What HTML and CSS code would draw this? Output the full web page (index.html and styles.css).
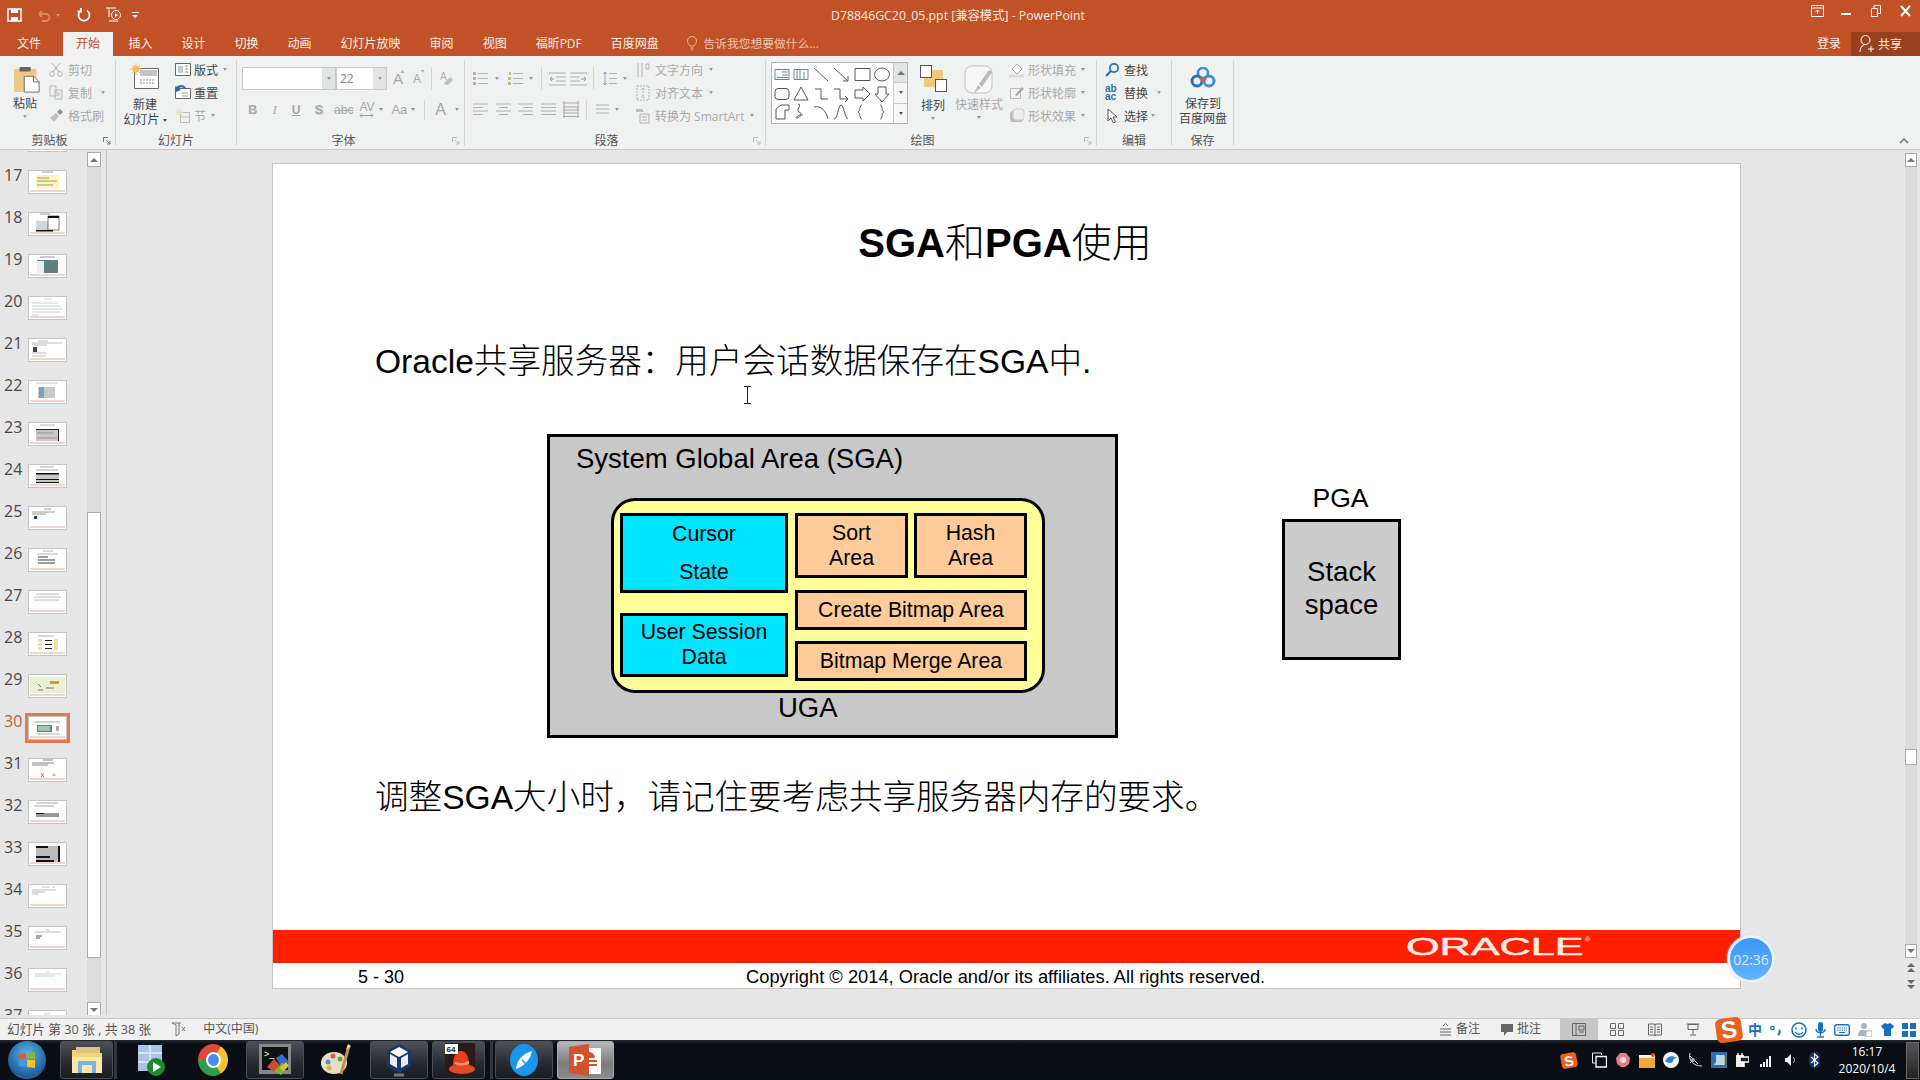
FILE: index.html
```html
<!DOCTYPE html>
<html lang="zh-CN">
<head>
<meta charset="utf-8">
<title>D78846GC20_05.ppt - PowerPoint</title>
<link rel="stylesheet" href="styles.css">
</head>
<body>
<div class="app">
  <header class="titlebar">
    <svg class="ml7" width="15" height="14" viewBox="0 0 15 14"><path d="M1 1h13v12H1z" fill="none" stroke="#fff" stroke-width="1.5"/><path d="M4 1h7v4H4zM4 9h7v4H4z" fill="#fff"/></svg>
    <svg class="ml15 faded" width="14" height="13" viewBox="0 0 14 13"><path d="M2 5h7a3.500 3.500 0 0 1 0 7H5M2 5l3-3M2 5l3 3" fill="none" stroke="#e8a080" stroke-width="1.800"/></svg>
    <span class="dd dd-faded ml5"></span>
    <svg class="ml17" width="14" height="14" viewBox="0 0 14 14"><path d="M10 2.500a5.500 5.500 0 1 1-6 0M4 0v3.500H.5" fill="none" stroke="#fff" stroke-width="1.800"/></svg>
    <svg class="ml14" width="17" height="16" viewBox="0 0 17 16"><path d="M1 1h10M4 1v9M13 14H4" fill="none" stroke="#fff"/><circle cx="11" cy="8" r="4.500" fill="none" stroke="#fff"/><path d="M10 6l3 2-3 2z" fill="#fff"/></svg>
    <span class="qat-more ml10"></span>
    <div class="doc-title">D78846GC20_05.ppt [兼容模式] - PowerPoint</div>
    <div class="winctl">
      <svg width="13" height="12" viewBox="0 0 13 12"><path d="M.5.500h12v11H.5zM.5 3h12M6.500 9V5M4.500 7l2-2 2 2" fill="none" stroke="#fff"/></svg>
      <svg class="ml17" width="10" height="12" viewBox="0 0 10 12"><path d="M0 9h10" stroke="#fff" stroke-width="2"/></svg>
      <svg class="ml20" width="10" height="12" viewBox="0 0 10 12"><path d="M.5 3.500h6v8h-6zM3 3V.5h6.500v8H7" fill="none" stroke="#fff"/></svg>
      <svg class="ml19" width="11" height="12" viewBox="0 0 11 12"><path d="M1 1l9 10M10 1L1 11" stroke="#fff" stroke-width="2"/></svg>
    </div>
  </header>

  <nav class="tabs">
    <span class="tab">文件</span><span class="tab tab-on">开始</span><span class="tab">插入</span><span class="tab">设计</span><span class="tab">切换</span><span class="tab">动画</span><span class="tab">幻灯片放映</span><span class="tab">审阅</span><span class="tab">视图</span><span class="tab">福昕PDF</span><span class="tab">百度网盘</span>
    <svg class="ml13" width="12" height="15" viewBox="0 0 12 15"><path d="M4 10C3 8 1.500 7.500 1.500 5a4.500 4.500 0 0 1 9 0c0 2.500-1.500 3-2.500 5zM4.500 12h3M5 14h2" fill="none" stroke="#eeb9a0"/></svg>
    <span class="tellme">告诉我您想要做什么...</span>
    <span class="login">登录</span>
    <span class="share"><svg width="15" height="20" viewBox="0 0 15 20"><circle cx="6.500" cy="6" r="4.500" fill="none" stroke="#fff"/><path d="M1 18c0-4 2-7 5-7.500M9 15h6M12 12v6" fill="none" stroke="#fff"/></svg>共享</span>
  </nav>

  <section class="ribbon">
    <!-- clipboard -->
    <div class="group w-clip">
      <div class="g-body">
        <div class="big ml13 w-paste">
          <svg class="mt5" width="27" height="29" viewBox="0 0 29 29"><rect x="0" y="3" width="24" height="25" rx="1" fill="#efc880"/><rect x="6" y="1" width="12" height="5" rx="1" fill="#666"/><path d="M11 11h10l6 6v11H11z" fill="#fff" stroke="#666"/><path d="M21 11v6h6" fill="none" stroke="#666"/></svg>
          <span class="lab dark mt2 nudge-l">粘贴</span>
          <span class="dd mt4 nudge-l"></span>
        </div>
        <div class="rows ml8">
          <div class="row"><svg width="14" height="15" viewBox="0 0 14 15"><path d="M3 1l7 9M11 1l-7 9" stroke="#b0b0b0" fill="none"/><circle cx="3" cy="12" r="2.300" fill="none" stroke="#b0b0b0"/><circle cx="11" cy="12" r="2.300" fill="none" stroke="#b0b0b0"/></svg><span class="ml5 off">剪切</span></div>
          <div class="row"><svg width="14" height="15" viewBox="0 0 14 15"><path d="M1 1h6v10H1zM6 5h7v9H6z" fill="#f0f1f1" stroke="#b8b8b8"/><path d="M8 8h3M8 10h3" stroke="#b8b8b8"/></svg><span class="ml5 off">复制</span><span class="dd ml9"></span></div>
          <div class="row"><svg width="14" height="15" viewBox="0 0 14 15"><path d="M1 10l6-5 3 3-5 6z" fill="#c0c0c0"/><path d="M8 4l3-3 3 3-3 3z" fill="#909090"/></svg><span class="ml5 off">格式刷</span></div>
        </div>
      </div>
      <div class="g-label lab-clip">剪贴板<svg class="launch" width="8" height="8" viewBox="0 0 8 8"><path d="M.5 5V.5H5M3 3l4 4M7 4v3H4" fill="none" stroke="#777"/></svg></div>
    </div>
    <!-- slides -->
    <div class="group w-slide">
      <div class="g-body">
        <div class="big ml7 w-new">
          <svg class="mt3" width="30" height="27" viewBox="0 0 30 27"><path d="M4.500 5.500h24v20h-24z" fill="#fff" stroke="#666"/><path d="M10 7h17v6H10z" fill="#c4c4c4"/><path d="M10 17h14M10 20h14" stroke="#888" stroke-dasharray="2 1"/><circle cx="6" cy="6" r="3.500" fill="#f0c060"/><path d="M6 0v12M0 6h12M2 2l8 8M10 2l-8 8" stroke="#f0c060"/></svg>
          <span class="lab dark mt7">新建</span>
          <span class="lab dark lh15">幻灯片<span class="dd ml3 dd-dark"></span></span>
        </div>
        <div class="rows ml8">
          <div class="row"><svg width="16" height="15" viewBox="0 0 16 15"><path d="M.5 1.500h15v12H.5z" fill="#fff" stroke="#666"/><path d="M3 4h5v7H3z" fill="#bcd"/><path d="M10 4h3M10 7h3M10 10h3" stroke="#888"/></svg><span class="ml3 dark">版式</span><span class="dd ml5"></span></div>
          <div class="row"><svg width="16" height="15" viewBox="0 0 16 15"><path d="M.5 3.500h15v10H.5z" fill="#fff" stroke="#666"/><path d="M7 8h6M7 11h6" stroke="#999"/><path d="M1 6a5 4 0 0 1 9-3" fill="none" stroke="#2a6db0" stroke-width="2.200"/><path d="M0 1l1 6 5-2z" fill="#2a6db0"/></svg><span class="ml3 dark">重置</span></div>
          <div class="row"><svg width="16" height="15" viewBox="0 0 16 15"><path d="M5.500 4.500h9v10h-9zM5.500 9h9" fill="none" stroke="#bbb"/><path d="M4 0v8M0 4h8M1 1l6 6M7 1L1 7" stroke="#e8dcc0"/></svg><span class="ml3 off">节</span><span class="dd ml5"></span></div>
        </div>
      </div>
      <div class="g-label">幻灯片</div>
    </div>
    <!-- font -->
    <div class="group w-font">
      <div class="g-body col">
        <div class="line1 ml5">
          <span class="combo w-fname"></span><span class="combo-arrow"><span class="dd"></span></span><span class="combo w-fsize">22</span><span class="combo-arrow"><span class="dd"></span></span>
          <span class="glyph big-a ml6">A<sup class="up">▴</sup></span>
          <span class="glyph mid-a ml8">A<sup class="up">▾</sup></span>
          <span class="vsep ml8"></span>
          <svg class="ml7" width="15" height="16" viewBox="0 0 15 16"><text x="1" y="9" class="svgtxt" font-size="10" fill="#b0b0b0">A</text><path d="M5 12l6-6 3 3-5 5H7z" fill="#c0c0c0"/></svg>
        </div>
        <div class="line2 ml11">
          <span class="glyph bold">B</span>
          <span class="glyph ital ml15">I</span>
          <span class="glyph under ml15">U</span>
          <span class="glyph bold shad ml14">S</span>
          <span class="glyph strike ml11">abc</span>
          <span class="glyph av ml6">AV<svg class="av-arrow" width="15" height="5" viewBox="0 0 15 5"><path d="M1 2.500h13M3 .5l-2 2 2 2M12 .5l2 2-2 2" fill="none" stroke="#999"/></svg></span>
          <span class="dd ml5"></span>
          <span class="glyph aa ml8">Aa</span>
          <span class="dd ml4"></span>
          <span class="vsep short ml9"></span>
          <span class="glyph a-col ml10">A</span>
          <span class="dd ml9"></span>
        </div>
      </div>
      <div class="g-label lab-font">字体<svg class="launch" width="8" height="8" viewBox="0 0 8 8"><path d="M.5 5V.5H5M3 3l4 4M7 4v3H4" fill="none" stroke="#bbb"/></svg></div>
    </div>
    <!-- paragraph -->
    <div class="group w-para">
      <div class="g-body">
        <div class="col w-para-l">
          <div class="line1 ml8">
            <svg width="15" height="15" viewBox="0 0 15 15"><path d="M5 2.500h10M5 7.500h10M5 12.500h10" stroke="#b0b0b0"/><path d="M0 1h3v3H0zM0 6h3v3H0zM0 11h3v3H0z" fill="#b0b0b0"/></svg>
            <span class="dd ml7"></span>
            <svg class="ml9" width="15" height="15" viewBox="0 0 15 15"><path d="M5 2.500h10M5 7.500h10M5 12.500h10" stroke="#b0b0b0"/><path d="M1 1h2v3H1zM0 6h3v3H0zM0 11h3v3H0z" fill="#c4b890"/></svg>
            <span class="dd ml6"></span>
            <span class="vsep ml8"></span>
            <svg class="ml7" width="17" height="14" viewBox="0 0 17 14"><path d="M0 1h17M7 5h10M7 9h10M0 13h17" stroke="#b0b0b0"/><path d="M5 7H1M3 5L1 7l2 2" stroke="#7aa0c0" fill="none"/></svg>
            <svg class="ml4" width="17" height="14" viewBox="0 0 17 14"><path d="M0 1h17M0 5h10M0 9h10M0 13h17" stroke="#b0b0b0"/><path d="M11 7h5M14 5l2 2-2 2" stroke="#7aa0c0" fill="none"/></svg>
            <span class="vsep ml6"></span>
            <svg class="ml8" width="15" height="15" viewBox="0 0 15 15"><path d="M7 2.500h8M7 7.500h8M7 12.500h8" stroke="#b0b0b0"/><path d="M3 1v13M1 3l2-2 2 2M1 12l2 2 2-2" stroke="#8aa8c4" fill="none"/></svg>
            <span class="dd ml6"></span>
          </div>
          <div class="line2 ml8">
            <svg width="15" height="13" viewBox="0 0 15 13"><path d="M0 1h15M0 4.500h10M0 8h15M0 11.500h10" stroke="#b0b0b0"/></svg>
            <svg class="ml8" width="15" height="13" viewBox="0 0 15 13"><path d="M0 1h15M3 4.500h9M0 8h15M3 11.500h9" stroke="#b0b0b0"/></svg>
            <svg class="ml7" width="15" height="13" viewBox="0 0 15 13"><path d="M0 1h15M5 4.500h10M0 8h15M5 11.500h10" stroke="#b0b0b0"/></svg>
            <svg class="ml8" width="15" height="13" viewBox="0 0 15 13"><path d="M0 1h15M0 4.500h15M0 8h15M0 11.500h15" stroke="#b0b0b0"/></svg>
            <svg class="ml7" width="16" height="17" viewBox="0 0 16 17"><path d="M0 2h16M0 15.500h16M0 6h16M0 9h16M0 12h16M1 0v17M15 0v17" stroke="#a8a8a8"/></svg>
            <span class="vsep short ml7"></span>
            <svg class="ml9" width="13" height="13" viewBox="0 0 13 13"><path d="M0 2h13M0 6h13M0 10h13" stroke="#b0b0b0"/></svg>
            <span class="dd ml6"></span>
          </div>
        </div>
        <div class="rows ml5">
          <div class="row"><svg width="14" height="16" viewBox="0 0 14 16"><path d="M2 1v14M6 1v14M10 2h3v5h-3z" stroke="#b0b0b0" fill="none"/></svg><span class="ml5 off">文字方向</span><span class="dd ml6"></span></div>
          <div class="row"><svg width="14" height="16" viewBox="0 0 14 16"><path d="M1 1h12v14H1zM7 3v10M5 5l2-2 2 2M5 11l2 2 2-2" stroke="#b0b0b0" fill="none" stroke-dasharray="2 1"/></svg><span class="ml5 off">对齐文本</span><span class="dd ml6"></span></div>
          <div class="row"><svg width="14" height="16" viewBox="0 0 14 16"><path d="M4 6h9v9H4zM6 9h5M6 12h5" stroke="#b0b0b0" fill="#f0f1f1"/><path d="M0 1h6l2 3H0z" fill="#bbb"/></svg><span class="ml5 off">转换为 SmartArt</span><span class="dd ml6"></span></div>
        </div>
      </div>
      <div class="g-label lab-para">段落<svg class="launch" width="8" height="8" viewBox="0 0 8 8"><path d="M.5 5V.5H5M3 3l4 4M7 4v3H4" fill="none" stroke="#bbb"/></svg></div>
    </div>
    <!-- drawing -->
    <div class="group w-draw">
      <div class="g-body">
        <div class="gallery">
          <svg width="121" height="60" viewBox="0 0 121 60">
            <g fill="none" stroke="#555">
              <path d="M3 6.500h14v10H3z" stroke="#5a8aa8"/><path d="M10 9h6M10 12h6M5 14.500h11" stroke="#5a8aa8"/>
              <path d="M22 6.500h14v10H22z" stroke="#5a8aa8"/><path d="M25 7v9M28 7v9M32 9v7" stroke="#5a8aa8"/>
              <path d="M42 5l14 13"/><path d="M62 5l14 13M76 13v5h-5"/>
              <path d="M83 5.500h15v12H83z"/><ellipse cx="110" cy="11.500" rx="7.500" ry="6.500"/>
              <rect x="3" y="25.500" width="14" height="11" rx="3"/><path d="M29 24l-7 13h14z"/>
              <path d="M43 26h6v10h7"/><path d="M62 26h6v10h8M73 33l3 3-3 3"/>
              <path d="M83 27h8v-3l7 7-7 7v-3h-8z"/><path d="M106 24h8v7h3l-7 8-7-8h3z"/>
              <path d="M4 56v-10l5-4h8v5h-4v9z"/><path d="M26 41c5 0-3 7 1 8s1 6-2 6 3-4 6-3"/>
              <path d="M42 44c7-2 12 4 14 12"/><path d="M62 56c4 0 4-14 7-14s4 14 7 14"/>
              <path d="M90 42c-3 0-1 6-4 7 3 1 1 7 4 7"/><path d="M108 42c3 0 1 6 4 7-3 1-1 7-4 7"/>
            </g>
          </svg>
          <div class="gal-scroll"><span class="gal-btn gal-up"><span class="up-tri"></span></span><span class="gal-btn"><span class="dd dd-dark"></span></span><span class="gal-btn gal-more"><span class="dd dd-dark"></span></span></div>
        </div>
        <div class="big ml11 w-arr">
          <svg class="mt5" width="27" height="27" viewBox="0 0 27 27"><rect x="4" y="5" width="19" height="17" fill="#f0c880"/><rect x=".5" y=".5" width="11" height="12" fill="#fff" stroke="#555"/><rect x="15.500" y="14.500" width="11" height="12" fill="#fff" stroke="#555"/></svg>
          <span class="lab dark mt6">排列</span>
          <span class="dd mt4"></span>
        </div>
        <div class="big ml8 w-quick">
          <svg class="mt5" width="30" height="30" viewBox="0 0 30 30"><rect x="1" y="1" width="27" height="27" rx="7" fill="#f7f7f7" stroke="#c0c0c0"/><path d="M10 28l4-8 3 3zM15 19l10-14 3 2-10 15z" fill="#bbb"/></svg>
          <span class="lab off mt2">快速样式</span>
          <span class="dd mt4"></span>
        </div>
        <div class="rows ml6">
          <div class="row"><svg width="16" height="16" viewBox="0 0 16 16"><path d="M3 7l5-5 5 5-5 5z" fill="#fff" stroke="#aaa"/><path d="M0 14h15" stroke="#ddd" stroke-width="3"/></svg><span class="ml3 off">形状填充</span><span class="dd ml5"></span></div>
          <div class="row"><svg width="16" height="16" viewBox="0 0 16 16"><path d="M1.500 3.500h10v10h-10z" fill="none" stroke="#bbb"/><path d="M6 10l7-8 2 2-7 7z" fill="#aaa"/></svg><span class="ml3 off">形状轮廓</span><span class="dd ml5"></span></div>
          <div class="row"><svg width="16" height="16" viewBox="0 0 16 16"><rect x="1" y="3" width="13" height="11" rx="3" fill="#bbb"/><rect x="4" y="1" width="11" height="11" rx="3" fill="#eee" stroke="#ccc"/></svg><span class="ml3 off">形状效果</span><span class="dd ml5"></span></div>
        </div>
      </div>
      <div class="g-label lab-para">绘图<svg class="launch" width="8" height="8" viewBox="0 0 8 8"><path d="M.5 5V.5H5M3 3l4 4M7 4v3H4" fill="none" stroke="#bbb"/></svg></div>
    </div>
    <!-- edit -->
    <div class="group w-edit">
      <div class="g-body">
        <div class="rows ml8">
          <div class="row"><svg width="15" height="15" viewBox="0 0 15 15"><circle cx="9" cy="6" r="4.200" fill="none" stroke="#1f6fb2" stroke-width="1.800"/><path d="M1 14l5-5" stroke="#1f6fb2" stroke-width="2"/></svg><span class="ml4 dark">查找</span></div>
          <div class="row"><span class="abac"><span>ab</span><span>ac</span></span><span class="ml4 dark">替换</span><span class="dd ml9"></span></div>
          <div class="row"><svg width="15" height="15" viewBox="0 0 15 15"><path d="M3 1l9 8H8l2.500 5-2 1L6 10l-3 3z" fill="#fff" stroke="#555"/></svg><span class="ml4 dark">选择</span><span class="dd ml3"></span></div>
        </div>
      </div>
      <div class="g-label">编辑</div>
    </div>
    <!-- save -->
    <div class="group w-save">
      <div class="g-body">
        <div class="big w-saved">
          <svg class="mt7" width="26" height="21" viewBox="0 0 26 21"><circle cx="13" cy="6" r="5" fill="none" stroke="#3f8fd8" stroke-width="2.500"/><circle cx="7" cy="14" r="5" fill="none" stroke="#2a6fc0" stroke-width="3"/><circle cx="19" cy="14" r="5" fill="none" stroke="#3f8fd8" stroke-width="3"/><path d="M10 11l3 3 3-3" fill="none" stroke="#e05a50" stroke-width="2.500"/></svg>
          <span class="lab dark mt8">保存到</span>
          <span class="lab dark lh15">百度网盘</span>
        </div>
      </div>
      <div class="g-label">保存</div>
    </div>
    <svg class="collapse" width="10" height="6" viewBox="0 0 10 6"><path d="M1 5l4-4 4 4" fill="none" stroke="#777" stroke-width="1.600"/></svg>
  </section>

  <main class="main">
    <aside class="panel">
      <div class="thumbs">
        <div class="t-row t-first"><span class="num"></span><div class="thumb"></div></div>
        <div class="t-row"><span class="num">17</span><div class="thumb"><svg viewBox="0 0 39 24"><path d="M8 5h23v13H8z" fill="#fdf5b8"/><path d="M14 2h11M9 8h12M9 11h20M9 15h16" stroke="#555" stroke-width=".6"/></svg></div></div>
        <div class="t-row"><span class="num">18</span><div class="thumb"><svg viewBox="0 0 39 24"><path d="M8 9h14v10H8z" fill="#cdd8dc"/><path d="M20 4h11v14H20z" fill="#fff" stroke="#222" stroke-width=".6"/><path d="M20 4h11v2H20zM8 18h17v1.500H8z" fill="#111"/><path d="M12 2h10" stroke="#555" stroke-width=".6"/></svg></div></div>
        <div class="t-row"><span class="num">19</span><div class="thumb"><svg viewBox="0 0 39 24"><path d="M9 6h21v13H9z" fill="#5f7f82"/><path d="M9 7h7v12H9z" fill="#e8eef0"/><path d="M12 3h15" stroke="#555" stroke-width=".6"/></svg></div></div>
        <div class="t-row"><span class="num">20</span><div class="thumb"><svg viewBox="0 0 39 24"><path d="M16 3h8M4 7h26M4 10h29M4 13h30M4 16h28M4 19h7" stroke="#999" stroke-width=".5"/></svg></div></div>
        <div class="t-row"><span class="num">21</span><div class="thumb"><svg viewBox="0 0 39 24"><path d="M10 3h10M4 5h30M4 7h15M4 15h14M4 18h14" stroke="#777" stroke-width=".5"/><path d="M5 9h4v5H5z" fill="#444"/></svg></div></div>
        <div class="t-row"><span class="num">22</span><div class="thumb"><svg viewBox="0 0 39 24"><path d="M10 7h17v11H10z" fill="#c8c8c8"/><path d="M11 7h5v11h-5z" fill="#7f9fc0"/><path d="M8 3h22" stroke="#888" stroke-width=".5"/></svg></div></div>
        <div class="t-row"><span class="num">23</span><div class="thumb"><svg viewBox="0 0 39 24"><path d="M8 7h23v12H8z" fill="#c8c8c8"/><path d="M8 7h23v1H8zM30 7h1v12h-1z" fill="#222"/><path d="M12 3h15M9 11h17M9 16h20" stroke="#666" stroke-width=".5"/></svg></div></div>
        <div class="t-row"><span class="num">24</span><div class="thumb"><svg viewBox="0 0 39 24"><path d="M8 9h23v9H8z" fill="#c8c8c8"/><path d="M8 9h23v1.500H8zM8 15h23v1H8zM8 18h23v1H8z" fill="#111"/><path d="M12 3h14M8 6h22" stroke="#555" stroke-width=".5"/></svg></div></div>
        <div class="t-row"><span class="num">25</span><div class="thumb"><svg viewBox="0 0 39 24"><path d="M16 3h7M4 6h23M4 8h14" stroke="#555" stroke-width=".6"/><path d="M6 10h3v3H6z" fill="#333"/></svg></div></div>
        <div class="t-row"><span class="num">26</span><div class="thumb"><svg viewBox="0 0 39 24"><path d="M15 3h10M9 6h21" stroke="#666" stroke-width=".5"/><path d="M10 9h10M10 12h17M10 15h17" stroke="#222" stroke-width=".9"/></svg></div></div>
        <div class="t-row"><span class="num">27</span><div class="thumb"><svg viewBox="0 0 39 24"><path d="M8 4h23M6 7h27M6 10h25" stroke="#777" stroke-width=".5"/></svg></div></div>
        <div class="t-row"><span class="num">28</span><div class="thumb"><svg viewBox="0 0 39 24"><path d="M10 4h16" stroke="#555" stroke-width=".5"/><path d="M10 7h4v3h-4zM10 11h4v3h-4zM10 15h4v3h-4zM26 7h4v11h-4z" fill="#e8e4a0"/><path d="M17 8h7v1H17zM17 12h7v1H17zM17 16h7v1H17z" fill="#222"/></svg></div></div>
        <div class="t-row"><span class="num">29</span><div class="thumb"><svg viewBox="0 0 39 24"><path d="M2 3h35v16H2z" fill="#e9f3d4"/><path d="M22 7h9v3h-9z" fill="#caa030"/><path d="M10 10l3 3M18 14h8M10 16h5" stroke="#555" stroke-width=".8"/></svg></div></div>
        <div class="t-row t-on"><span class="num">30</span><div class="thumb"><svg viewBox="0 0 39 24"><path d="M6 6h26" stroke="#444" stroke-width=".5"/><path d="M9 9h15v7H9z" fill="#777"/><path d="M10 10h12v5H10z" fill="#9bc7b0"/><path d="M28 10h3v5h-3z" fill="#aaa"/><path d="M8 18h24" stroke="#666" stroke-width=".5"/></svg></div></div>
        <div class="t-row"><span class="num">31</span><div class="thumb"><svg viewBox="0 0 39 24"><path d="M15 2h10M4 5h22M4 7h16" stroke="#333" stroke-width=".6"/><path d="M13 15l3 4M16 15l-3 4" stroke="#c44" stroke-width=".8"/><path d="M24 18l2-3 2 3z" fill="#bb9"/></svg></div></div>
        <div class="t-row"><span class="num">32</span><div class="thumb"><svg viewBox="0 0 39 24"><path d="M8 3h22M6 6h20" stroke="#555" stroke-width=".5"/><path d="M8 13h23v4H8z" fill="#999"/><path d="M8 13h8v1H8z" fill="#111"/></svg></div></div>
        <div class="t-row"><span class="num">33</span><div class="thumb"><svg viewBox="0 0 39 24"><path d="M8 4h24v17H8z" fill="#bcbcbc"/><path d="M8 4h12v2H8zM8 14h14v2H8zM8 18h18v2H8zM30 4h2v17h-2z" fill="#111"/></svg></div></div>
        <div class="t-row"><span class="num">34</span><div class="thumb"><svg viewBox="0 0 39 24"><path d="M14 3h8M24 3h3M4 6h24M4 8h13M4 10h6" stroke="#777" stroke-width=".5"/></svg></div></div>
        <div class="t-row"><span class="num">35</span><div class="thumb"><svg viewBox="0 0 39 24"><path d="M18 4h3M7 6h26" stroke="#777" stroke-width=".5"/><path d="M8 10h6M8 12h4" stroke="#222" stroke-width=".8"/></svg></div></div>
        <div class="t-row"><span class="num">36</span><div class="thumb"><svg viewBox="0 0 39 24"><path d="M18 4h3M7 6h26M7 8h20" stroke="#999" stroke-width=".5"/></svg></div></div>
        <div class="t-row"><span class="num">37</span><div class="thumb"><svg viewBox="0 0 39 24"><path d="M16 4h6M7 6h25" stroke="#999" stroke-width=".5"/></svg></div></div>
      </div>
      <div class="scroll-l">
        <span class="sb-btn"><span class="up-tri"></span></span>
        <span class="sb-track sb-a"></span>
        <span class="sb-thumb"></span>
        <span class="sb-track sb-b"></span>
        <span class="sb-btn"><span class="dn-tri"></span></span>
      </div>
    </aside>

    <div class="canvas">
      <article class="slide">
        <h1 class="s-title">SGA<span class="cjk">和</span>PGA<span class="cjk">使用</span></h1>
        <p class="s-text s-text1">Oracle共享服务器：用户会话数据保存在SGA中.</p>
        <div class="figure">
          <div class="sga">
            <div class="sga-label">System Global Area (SGA)</div>
            <div class="uga-box">
              <div class="uga-left">
                <div class="cell cyan h-cursor"><span class="cursor-l1">Cursor</span><span class="cursor-l2">State</span></div>
                <div class="cell cyan h-user"><span>User Session</span><span>Data</span></div>
              </div>
              <div class="uga-right">
                <div class="uga-top">
                  <div class="cell peach w-sort"><span>Sort</span><span>Area</span></div>
                  <div class="cell peach w-hash"><span>Hash</span><span>Area</span></div>
                </div>
                <div class="cell peach h-bar">Create Bitmap Area</div>
                <div class="cell peach h-bar">Bitmap Merge Area</div>
              </div>
            </div>
            <div class="uga-label">UGA</div>
          </div>
          <div class="pga">
            <div class="pga-label">PGA</div>
            <div class="stack"><span>Stack</span><span>space</span></div>
          </div>
        </div>
        <p class="s-text s-text2">调整SGA大小时，请记住要考虑共享服务器内存的要求。</p>
        <div class="band"><span class="oracle">ORACLE</span><span class="reg">®</span></div>
        <footer class="s-foot"><span class="pg">5 - 30</span><span class="copy">Copyright © 2014, Oracle and/or its affiliates. All rights reserved.</span></footer>
        <svg class="ibeam" width="9" height="18" viewBox="0 0 9 18"><path d="M1 .5h7M4.500 .5v17M1 17.500h7" fill="none" stroke="#222"/></svg>
      </article>
    </div>

    <div class="scroll-r">
      <span class="sb-btn sb-r"><span class="up-tri"></span></span>
      <span class="sb-track sb-c"></span>
      <span class="sb-thumb sb-thumb-r"></span>
      <span class="sb-track sb-d"></span>
      <span class="sb-btn sb-r"><span class="dn-tri"></span></span>
      <svg class="mt4" width="12" height="11" viewBox="0 0 12 11"><path d="M2 5l4-4 4 4zM2 10l4-4 4 4z" fill="#666"/></svg>
      <svg class="mt6" width="12" height="11" viewBox="0 0 12 11"><path d="M2 1l4 4 4-4zM2 6l4 4 4-4z" fill="#666"/></svg>
    </div>
  </main>

  <footer class="status">
    <span class="st-text st-long ml7">幻灯片 第 30 张 , 共 38 张</span>
    <svg class="ml20" width="15" height="15" viewBox="0 0 15 15"><path d="M1 1h7v11l-3 2V3zM8 1h2" fill="none" stroke="#777"/><path d="M11 5l3 4M14 5l-3 4" stroke="#777"/></svg>
    <span class="st-text ml17">中文(中国)</span>
    <div class="st-right">
      <svg width="11" height="13" viewBox="0 0 11 13"><path d="M0 6h11M0 9h11M0 12h11M3 3l2.500-2.500L8 3" fill="none" stroke="#666"/></svg>
      <span class="st-text ml5">备注</span>
      <svg class="ml21" width="12" height="12" viewBox="0 0 12 12"><path d="M0 0h12v8H6l-3 4V8H0z" fill="#666"/></svg>
      <span class="st-text ml4">批注</span>
      <span class="view view-on ml19"><svg width="14" height="13" viewBox="0 0 14 13"><path d="M.5.500h13v12H.5zM4 .5v12M7 3h5v4H7zM7 9h5" fill="none" stroke="#666"/></svg></span>
      <span class="view"><svg width="14" height="13" viewBox="0 0 14 13"><path d="M.5.500h5v5h-5zM8.500.500h5v5h-5zM.5 7.500h5v5h-5zM8.500 7.500h5v5h-5z" fill="none" stroke="#666"/></svg></span>
      <span class="view"><svg width="14" height="13" viewBox="0 0 14 13"><path d="M.5 1h6l.5 1 .5-1h6v11h-6L7 13l-.5-1h-6zM7 2v10M2 4h3M2 6.500h3M2 9h3M9 4h3M9 6.500h3M9 9h3" fill="none" stroke="#666"/></svg></span>
      <span class="view"><svg width="14" height="13" viewBox="0 0 14 13"><path d="M.5 1h13M2 1.500h10v5H2zM7 6.500V11M4 12h6" fill="none" stroke="#666"/></svg></span>
      <span class="sogou ml4 st-s">S</span>
      <div class="ime">
        <span class="ime-zh">中</span>
        <svg width="12" height="14" viewBox="0 0 12 14"><circle cx="2.500" cy="5" r="1.700" fill="none" stroke="#1a6fc0" stroke-width="1.300"/><path d="M9 7c1 1 1 3-1 5" fill="none" stroke="#1a6fc0" stroke-width="2"/></svg>
        <svg width="16" height="16" viewBox="0 0 16 16"><circle cx="8" cy="8" r="7" fill="none" stroke="#1a6fc0" stroke-width="1.600"/><path d="M5 5.500v2M11 5.500v2" stroke="#1a6fc0" stroke-width="1.600"/><path d="M4 10c2 3 6 3 8 0" fill="none" stroke="#1a6fc0" stroke-width="1.300"/></svg>
        <svg width="11" height="16" viewBox="0 0 11 16"><rect x="3" y="0" width="5" height="10" rx="2.500" fill="#1a6fc0"/><path d="M1 7c0 5 9 5 9 0M5.500 11v3M2 15h7" fill="none" stroke="#1a6fc0" stroke-width="1.300"/></svg>
        <svg width="16" height="12" viewBox="0 0 16 12"><rect x=".7" y=".7" width="14.600" height="10.600" rx="2" fill="none" stroke="#1a6fc0" stroke-width="1.400"/><path d="M3 4h10M3 6.200h10" stroke="#1a6fc0" stroke-dasharray="1.500 .8"/><path d="M5 8.500h6" stroke="#1a6fc0"/></svg>
        <svg width="14" height="15" viewBox="0 0 14 15"><circle cx="6" cy="4" r="3" fill="#a8b4bc"/><path d="M0 14c0-6 3-6 6-6s4 1 5 2v4z" fill="#a8b4bc"/><rect x="8" y="9" width="6" height="6" fill="#fff" stroke="#a8b4bc"/></svg>
        <svg width="13" height="13" viewBox="0 0 13 13"><path d="M4 0l2.500 1L9 0l4 3-2 3-1-.5V13H3V5.500L2 6 0 3z" fill="#1a6fc0"/></svg>
        <svg width="14" height="14" viewBox="0 0 14 14"><path d="M0 0h6v6H0zM8 0h6v6H8zM0 8h6v6H0zM8 8h6v6H8z" fill="#1a6fc0"/></svg>
      </div>
    </div>
  </footer>

  <div class="taskbar">
    <span class="orb ml8"><svg width="18" height="18" viewBox="0 0 18 18"><path d="M1 3l7-1v6H1z" fill="#e8563a"/><path d="M9 2l8-1v7H9z" fill="#7dbb3c"/><path d="M1 9h7v7l-7-1z" fill="#3f9be0"/><path d="M9 9h8v8l-8-1z" fill="#f2c230"/></svg></span>
    <span class="tb-btn w-tb53 ml14"><svg width="34" height="32" viewBox="0 0 34 32"><path d="M2 6h12l3 3h15v20H2z" fill="#f3d57c"/><path d="M2 13h30v16H2z" fill="#f9e8a8"/><path d="M6 3h24v6H6z" fill="#dcc67a"/><path d="M8 17h18v12h-4V21H12v8H8z" fill="#79b4e4"/></svg></span>
    <span class="tb-div"></span>
    <span class="tb-ico ml20"><svg width="28" height="34" viewBox="0 0 28 34"><path d="M1 2h24v26H1z" fill="#a9c4ea"/><path d="M1 10h24M1 19h24M13 2v26" stroke="#e4edf9" stroke-width="1.500"/><circle cx="19" cy="24" r="9" fill="#1f8a2c"/><path d="M16 19l8 5-8 5z" fill="#fff"/></svg></span>
    <span class="chrome ml33"><span class="chrome-in"></span></span>
    <span class="tb-btn w-tb58 ml18"><svg width="34" height="34" viewBox="0 0 34 34"><path d="M1 1h32v30H1z" fill="#888"/><path d="M4 4h26v23H4z" fill="#111"/><text x="6" y="14" class="svgtxt" font-size="9" fill="#fff">&gt;_</text><path d="M9 24l7-8 6 6-6 7z" fill="#d04a3a"/><path d="M18 15l6-4 7 8-7 6z" fill="#2a70c8"/><path d="M16 28l8-8 7 2-8 10z" fill="#78b830"/><path d="M22 25l6-6 3 4-6 5z" fill="#e8c030"/></svg></span>
    <span class="tb-ico ml16"><svg width="32" height="36" viewBox="0 0 32 36"><ellipse cx="14" cy="21" rx="13" ry="11" fill="#e7dcc8"/><circle cx="8" cy="20" r="2.500" fill="#4a90d8"/><circle cx="13" cy="14" r="2.500" fill="#d85a50"/><circle cx="20" cy="17" r="2.500" fill="#58a850"/><circle cx="9" cy="26" r="2.500" fill="#e0b830"/><path d="M21 32L29 4" stroke="#c89040" stroke-width="3"/><path d="M26 8l2-6 3 2z" fill="#f0e0c0"/></svg></span>
    <span class="tb-btn w-tb58 ml18"><svg width="28" height="36" viewBox="0 0 28 36"><path d="M14 2l12 7v15l-12 7L2 24V9z" fill="#16386e"/><path d="M14 5l9 5-9 5-9-5z" fill="#fff"/><path d="M5 12l7 4v10l-7-4zM23 12l-7 4v10l7-4z" fill="#e9eef5"/><path d="M9 33h10" stroke="#777" stroke-width="3"/></svg></span>
    <span class="tb-btn w-tb53 ml4"><svg width="32" height="36" viewBox="0 0 32 36"><rect x="2" y="1" width="30" height="34" fill="#2a1a18"/><ellipse cx="19" cy="27" rx="13" ry="5" fill="#e04a28"/><path d="M10 24c0-8 2-15 8-15s8 7 8 15c-6 3-11 3-16 0z" fill="#e8401e"/><path d="M12 20c5 2 10 1 14-1v3c-5 2-10 2-14 0z" fill="#f9a070"/><rect x="2" y="2" width="13" height="10" fill="#fff"/><text x="3.500" y="10" class="svgtxt" font-size="8" font-weight="700" fill="#222">64</text></svg></span>
    <span class="tb-div tb-div2"></span>
    <span class="tb-btn w-tb58 ml2"><svg width="30" height="34" viewBox="0 0 30 34"><ellipse cx="15" cy="17" rx="14" ry="16" fill="#1a96ea"/><path d="M7 26c1-9 6-15 16-18-2 8-6 14-16 18z" fill="#fff"/><path d="M13 17l5 5" stroke="#1a96ea" stroke-width="1.500"/></svg></span>
    <span class="tb-btn tb-btn-on w-tb57 ml4"><svg width="34" height="34" viewBox="0 0 34 34"><path d="M13 5h19v26H13z" fill="#fff"/><path d="M20 9a6 6 0 0 1 6 6h-6zM19 17h9v2h-9zM19 21h9v2h-9z" fill="#d2512e"/><path d="M0 4l20-3v32L0 30z" fill="#d2512e"/><text x="4" y="23" class="svgtxt" font-size="17" font-weight="700" fill="#fff">P</text></svg></span>
    <div class="tray">
      <span class="sogou sogou-sm">S</span>
      <svg class="ml15" width="15" height="16" viewBox="0 0 15 16"><path d="M.5 1h9v2M.5 1v10h3" fill="none" stroke="#eee"/><path d="M4 4.500h10.500V15H4z" fill="none" stroke="#fff" stroke-width="1.300"/></svg>
      <svg class="ml8" width="16" height="16" viewBox="0 0 16 16"><path d="M5 1h6l4 5-1 6-4 3H6l-4-3-1-6z" fill="#e57c8c"/><circle cx="8" cy="8" r="3" fill="#f8d8d8"/></svg>
      <svg class="ml8" width="16" height="15" viewBox="0 0 16 15"><path d="M0 2h16v13H0z" fill="#f2a83a"/><path d="M0 2h16v3H0z" fill="#f4f4f4"/><circle cx="14" cy="2" r="2" fill="#e2562c"/></svg>
      <svg class="ml8" width="16" height="16" viewBox="0 0 16 16"><circle cx="8" cy="8" r="8" fill="#f2f6fb"/><path d="M2 9c3-5 7-6 12-3-3 0-4 1-4 3s-4 3-8 0z" fill="#2a80d8"/></svg>
      <svg class="ml8" width="16" height="16" viewBox="0 0 16 16"><path d="M3 1c-2 7 3 13 12 13" fill="none" stroke="#ddd"/><path d="M3 4l8 8M3 11l4-4" stroke="#fff"/><circle cx="6" cy="8" r="2" fill="#aaa"/></svg>
      <svg class="ml8" width="16" height="16" viewBox="0 0 16 16"><rect width="16" height="16" fill="#2d6fb2"/><path d="M2 13L14 3v10z" fill="#d8c050"/><rect x="5" y="3" width="8" height="10" fill="#bcd8f0"/></svg>
      <svg class="ml8" width="14" height="16" viewBox="0 0 14 16"><path d="M1 3h8v12H1z" fill="#eee"/><path d="M3 1v3M7 1v3M5 5h9v5H5zM9 10v5" stroke="#fff" stroke-width="1.500" fill="#222"/></svg>
      <svg class="ml10" width="14" height="14" viewBox="0 0 14 14"><path d="M1 11h2v3H1zM4 9h2v5H4zM7 6h2v8H7zM10 3h2v11h-2z" fill="#f0f0f0"/></svg>
      <svg class="ml12" width="11" height="14" viewBox="0 0 11 14"><path d="M0 5h2l4-4v12L2 9H0z" fill="#eee"/><path d="M8 4c2 2 2 4 0 6" fill="none" stroke="#bbb"/></svg>
      <svg class="ml13" width="11" height="16" viewBox="0 0 11 16"><rect width="11" height="16" rx="5" fill="#12306a"/><path d="M2 5l7 6-3.500 3V2L9 5l-7 6" fill="none" stroke="#fff" stroke-width="1.100"/></svg>
      <div class="clock ml11"><span>16:17</span><span>2020/10/4</span></div>
      <span class="show-desk"></span>
    </div>
  </div>

  <div class="timer">02:36</div>
</div>
</body>
</html>
```

FILE: styles.css
```css
* { box-sizing: border-box; }
html, body { margin: 0; height: 100%; }
body { font-family: "Open Sans", "Noto Sans CJK SC", sans-serif; font-size: 12px; color: #444; overflow: hidden; }
svg { display: block; flex: none; }
.svgtxt { font-family: "Liberation Sans", sans-serif; }

.app { position: relative; width: 1920px; height: 1080px; display: flex; flex-direction: column; background: #e6e6e6; overflow: hidden; }

.ml1 { margin-left: 1px; } .ml2 { margin-left: 2px; } .ml3 { margin-left: 3px; } .ml4 { margin-left: 4px; } .ml5 { margin-left: 5px; } .ml6 { margin-left: 6px; } .ml7 { margin-left: 7px; } .ml8 { margin-left: 8px; } .ml9 { margin-left: 9px; } .ml10 { margin-left: 10px; } .ml11 { margin-left: 11px; } .ml12 { margin-left: 12px; } .ml13 { margin-left: 13px; } .ml14 { margin-left: 14px; } .ml15 { margin-left: 15px; } .ml16 { margin-left: 16px; } .ml17 { margin-left: 17px; } .ml18 { margin-left: 18px; } .ml19 { margin-left: 19px; } .ml20 { margin-left: 20px; } .ml21 { margin-left: 21px; } .ml33 { margin-left: 33px; }
.mt1 { margin-top: 1px; } .mt2 { margin-top: 2px; } .mt3 { margin-top: 3px; } .mt4 { margin-top: 4px; } .mt5 { margin-top: 5px; } .mt6 { margin-top: 6px; } .mt7 { margin-top: 7px; } .mt8 { margin-top: 8px; } .mt9 { margin-top: 9px; }

/* title bar */
.titlebar { position: relative; height: 30px; background: #c15126; display: flex; align-items: center; flex: none; }
.faded { opacity: .7; }
.qat-more { width: 7px; height: 6px; border-top: 1px solid #fff; position: relative; }
.qat-more::after { content: ""; position: absolute; left: 0; top: 2px; border-left: 3.500px solid transparent; border-right: 3.500px solid transparent; border-top: 3.500px solid #fff; }
.doc-title { position: absolute; left: 0; right: 0; top: 7px; text-align: center; color: #fbe9e0; font-size: 12.300px; line-height: 17px; padding-right: 4px; }
.winctl { margin-left: auto; padding-right: 9px; display: flex; align-items: center; margin-top: -8px; }

/* tabs */
.tabs { height: 26px; background: #c15126; display: flex; align-items: flex-end; padding-left: 2.500px; flex: none; }
.tabs svg { align-self: center; }
.tab { height: 24px; line-height: 23px; padding: 0 14.500px; color: #fbeee8; font-size: 12px; }
.tab-on { background: #f0f1f1; color: #c15126; margin-left: 7.500px; padding: 0 13px; }
.tab-on + .tab { padding-left: 15.500px; }
.tellme { margin-left: 5px; color: #efc3ae; line-height: 23px; height: 24px; font-size: 11.800px; }
.login { margin-left: auto; color: #fbeee8; line-height: 23px; height: 24px; }
.share { margin-left: 10px; width: 69px; height: 24px; background: #99411f; color: #fbeee8; display: flex; align-items: center; gap: 4px; padding-left: 8px; line-height: 23px; }

/* ribbon */
.ribbon { position: relative; height: 94px; background: #f0f1f1; border-bottom: 1px solid #c8c8c8; display: flex; flex: none; padding-top: 4px; }
.group { height: 86px; border-right: 1px solid #d4d4d4; flex: none; }
.w-clip { width: 116px; } .w-slide { width: 121px; } .w-font { width: 228px; } .w-para { width: 301px; } .w-draw { width: 331px; } .w-edit { width: 75px; } .w-save { width: 62px; }
.g-body { height: 71px; display: flex; }
.col { flex-direction: column; }
.g-label { position: relative; height: 18px; line-height: 20px; text-align: center; color: #555; font-size: 12px; }
.lab-clip { padding-right: 16px; }
.lab-font { padding-right: 14px; }
.lab-para { padding-right: 17px; }
.launch { position: absolute; right: 4px; top: 6px; }
.big { display: flex; flex-direction: column; align-items: center; flex: none; }
.w-paste { width: 28px; } .w-new { width: 44px; } .w-arr { width: 28px; } .w-quick { width: 48px; } .w-saved { width: 62px; }
.nudge-l { margin-right: 4px; }
.lab { font-size: 12px; line-height: 15px; white-space: nowrap; }
.lh15 { line-height: 15px; }
.dark { color: #444; }
.off { color: #a9a9a9; }
.rows { display: flex; flex-direction: column; flex: none; margin-top: -2px; }
.row { height: 23px; display: flex; align-items: center; white-space: nowrap; }
.dd { display: inline-block; width: 0; height: 0; border-left: 2.500px solid transparent; border-right: 2.500px solid transparent; border-top: 3px solid #999; flex: none; vertical-align: middle; }
.dd-dark { border-top-color: #555; }
.dd-faded { border-top-color: #dd9070; }

.line1 { height: 23px; margin-top: 7px; display: flex; align-items: center; }
.line2 { height: 23px; margin-top: 8px; display: flex; align-items: center; }
.combo { height: 23px; background: #fff; border: 1px solid #c8c8c8; border-right: 0; display: block; color: #888; line-height: 21px; padding-left: 3px; font-size: 12px; }
.w-fname { width: 80px; } .w-fsize { width: 37px; }
.combo-arrow { width: 14px; height: 23px; background: #e2e3e3; border: 1px solid #c8c8c8; border-left: 0; display: flex; align-items: center; justify-content: center; }
.glyph { color: #a8a8a8; font-family: "Liberation Sans", sans-serif; font-size: 12px; line-height: 14px; white-space: nowrap; position: relative; }
.big-a { font-size: 15px; width: 12px; }
.mid-a { font-size: 12px; width: 10px; }
.up { position: absolute; top: -4px; left: 8px; font-size: 6px; line-height: 6px; }
.vsep { width: 1px; height: 23px; background: #d4d4d4; flex: none; display: block; }
.short { height: 20px; }
.bold { font-weight: 700; font-size: 13px; }
.ital { font-style: italic; font-family: "Liberation Serif", serif; font-size: 13px; }
.under { text-decoration: underline; font-weight: 700; font-size: 12px; }
.shad { text-shadow: 1px 1px 1px #ccc; }
.strike { text-decoration: line-through; font-size: 12px; }
.av { font-size: 12px; line-height: 10px; width: 15px; display: block; margin-top: -6px; }
.av-arrow { position: absolute; top: 11px; left: 0; }
.aa { font-size: 13px; }
.a-col { font-size: 16px; }

.w-para-l { display: flex; flex-direction: column; width: 166px; flex: none; }

.gallery { margin: 2px 0 0 5px; width: 137px; height: 62px; background: #fff; border: 1px solid #b4b4b4; display: flex; flex: none; }
.gal-scroll { width: 14px; margin-left: auto; display: flex; flex-direction: column; border-left: 1px solid #c8c8c8; }
.gal-btn { flex: 1; background: #f6f6f6; border-bottom: 1px solid #c8c8c8; display: flex; align-items: center; justify-content: center; }
.gal-up { background: #e2e3e3; }
.gal-more { border-bottom: 0; }
.abac { width: 15px; display: flex; flex-direction: column; font-family: "Liberation Sans", sans-serif; font-size: 10px; line-height: 8px; color: #2a6db0; font-weight: 700; }
.collapse { position: absolute; right: 11px; top: 82px; }

/* main */
.main { display: flex; height: 868px; flex: none; }
.panel { width: 107px; flex: none; display: flex; border-right: 1px solid #c4c4c4; overflow: hidden; height: 865px; }
.thumbs { width: 87px; flex: none; height: 868px; overflow: hidden; }
.t-row { height: 42px; display: flex; position: relative; }
.t-first { margin-top: -22px; }
.num { width: 28px; padding-left: 4px; margin-top: -5px; font-size: 16px; line-height: 20px; height: 20px; color: #484848; flex: none; }
.t-on .num { color: #d0583a; }
.thumb { position: relative; width: 39px; height: 24px; background: #fff; border: 1px solid #c4c4c4; }
.thumb svg { position: absolute; left: -1px; top: -1px; width: 39px; height: 24px; }
.thumb::after { content: ""; position: absolute; left: 1px; right: 1px; bottom: 1px; height: 2px; background: #f6d2cc; }
.t-on .thumb { outline: 3px solid #e27a50; outline-offset: 0; }

.scroll-l { width: 14px; display: flex; flex-direction: column; padding-top: 2px; flex: none; }
.sb-btn { height: 15px; background: #fff; border: 1px solid #aaa; display: flex; align-items: center; justify-content: center; flex: none; }
.sb-track { background: #dcdcdc; display: block; flex: none; }
.sb-a { height: 345px; }
.sb-thumb { height: 446px; background: #fff; border: 1px solid #aaa; display: block; flex: none; }
.sb-b { height: 44px; }
.up-tri { width: 0; height: 0; border-left: 4px solid transparent; border-right: 4px solid transparent; border-bottom: 4px solid #777; }
.dn-tri { width: 0; height: 0; border-left: 4px solid transparent; border-right: 4px solid transparent; border-top: 4px solid #777; }

.canvas { width: 1799px; flex: none; padding: 13px 0 0 165px; }
.slide { position: relative; width: 1469px; height: 826px; background: #fff; border: 1px solid #c4c4c4; display: flex; flex-direction: column; font-family: "Liberation Sans", "Noto Sans CJK SC", sans-serif; color: #000; }
.s-title { margin: 56px 0 0; font-size: 40px; line-height: 46px; font-weight: 700; text-align: center; padding-right: 3px; color: #000; }
.cjk { font-weight: 300; }
.s-text { margin: 0; padding-left: 102px; font-size: 33.600px; line-height: 40px; white-space: nowrap; font-weight: 300; }
.s-text1 { margin-top: 76px; }
.s-text2 { margin-top: 40px; }

.figure { display: flex; margin: 52px 0 0 274px; height: 304px; }
.sga { width: 571px; height: 304px; background: #c8c8c8; border: 3px solid #000; flex: none; }
.sga-label { height: 44px; line-height: 44px; padding-left: 26px; font-size: 27.500px; white-space: nowrap; }
.uga-box { margin: 17px 0 0 61px; width: 434px; height: 195px; background: #ffff99; border: 3px solid #000; border-radius: 24px; padding: 12px 0 0 6px; display: flex; gap: 7px; }
.uga-left { width: 168px; flex: none; display: flex; flex-direction: column; gap: 20px; }
.uga-right { width: 232px; flex: none; display: flex; flex-direction: column; gap: 11px; }
.uga-top { display: flex; gap: 6px; margin-bottom: 1px; }
.cell { border: 3px solid #000; display: flex; flex-direction: column; align-items: center; justify-content: center; font-size: 21.300px; line-height: 25px; white-space: nowrap; }
.cyan { background: #00e5ff; }
.peach { background: #ffcc99; }
.h-cursor { height: 80px; }
.cursor-l2 { margin-top: 13px; }
.h-user { height: 64px; }
.w-sort { width: 113px; height: 65px; }
.w-hash { width: 113px; height: 65px; }
.h-bar { height: 40px; }
.uga-label { margin-left: 228px; height: 30px; line-height: 30px; font-size: 27.500px; }

.pga { margin: 50px 0 0 164px; width: 119px; flex: none; }
.pga-label { height: 28px; line-height: 28px; text-align: center; font-size: 26.500px; margin-bottom: 7px; padding-right: 2px; }
.stack { height: 141px; background: #ccc; border: 3px solid #000; display: flex; flex-direction: column; align-items: center; justify-content: center; font-size: 27.500px; line-height: 33px; padding-bottom: 4px; }

.band { margin-top: auto; height: 33px; background: #ff1e00; display: flex; align-items: center; flex: none; position: relative; overflow: hidden; }
.oracle { position: absolute; left: 1133px; top: 2px; font-family: "Liberation Sans", sans-serif; font-size: 24px; line-height: 29px; font-weight: 400; -webkit-text-stroke: .5px #ffece6; color: #ffece6; transform: scaleX(1.800); transform-origin: left center; }
.reg { position: absolute; left: 1312px; top: 6px; font-size: 7px; line-height: 8px; color: #ffece6; }
.s-foot { height: 25px; display: flex; align-items: center; font-size: 18px; white-space: nowrap; flex: none; padding-top: 3px; }
.pg { margin-left: 85px; }
.copy { margin-left: 342px; font-size: 18.300px; }
.ibeam { position: absolute; left: 470px; top: 222px; }

.scroll-r { width: 12px; flex: none; display: flex; flex-direction: column; padding-top: 3px; margin-left: -1px; }
.sb-r { height: 14px; }
.sb-c { height: 582px; }
.sb-thumb-r { height: 16px; }
.sb-d { height: 179px; }

/* status */
.status { height: 22px; background: #f0f0f0; border-top: 1px solid #c8c8c8; display: flex; align-items: center; flex: none; }
.st-text { font-size: 12px; color: #555; line-height: 20px; white-space: nowrap; margin-top: -1px; }
.st-long { font-size: 12.700px; }
.st-right { margin-left: auto; display: flex; align-items: center; height: 21px; }
.view { width: 38px; height: 22px; display: flex; align-items: center; justify-content: center; }
.view-on { background: #c6c6c6; }
.sogou { font-family: "Liberation Sans", sans-serif; font-weight: 700; color: #fff; background: #e8621e; display: flex; align-items: center; justify-content: center; border-radius: 5px; transform: rotate(-8deg); }
.st-s { width: 26px; height: 24px; font-size: 24px; margin-right: -2px; position: relative; z-index: 1; flex: none; }
.ime { width: 180px; height: 22px; background: #fff; display: flex; align-items: center; gap: 8.300px; padding-left: 8px; }
.ime-zh { width: 14px; color: #1a6fc0; font-weight: 700; font-size: 14px; line-height: 16px; }

/* taskbar */
.taskbar { height: 40px; background: linear-gradient(#23282f 0, #0a0e14 4px, #0a0e15 100%); display: flex; align-items: center; flex: none; }
.orb { width: 38px; height: 38px; border-radius: 50%; background: radial-gradient(circle at 50% 35%, #5fb4e6, #1a5d9c 70%, #2fa0c8); display: flex; align-items: center; justify-content: center; flex: none; }
.tb-btn { height: 38px; border: 1px solid #4a4f55; border-radius: 3px; background: linear-gradient(#4d5157, #262a30 60%, #1a1d22); display: flex; align-items: center; justify-content: center; flex: none; }
.tb-btn-on { background: linear-gradient(#b8b8b8, #7c7c7c 60%, #8c8c8c); border-color: #aaa; }
.w-tb53 { width: 53px; } .w-tb57 { width: 57px; } .w-tb58 { width: 58px; }
.tb-div { width: 3px; height: 38px; background: #33373c; margin-left: 1px; flex: none; }
.tb-div2 { margin-left: 5px; }
.tb-ico { display: flex; align-items: center; justify-content: center; flex: none; }
.chrome { width: 30px; height: 32px; border-radius: 50%; background: conic-gradient(#e2483a 0 30deg, #f4c430 30deg 150deg, #2e9e4a 150deg 270deg, #e2483a 270deg); display: flex; align-items: center; justify-content: center; flex: none; }
.chrome-in { width: 15px; height: 16px; border-radius: 50%; background: #4a8cf0; border: 2px solid #fff; }
.tray { margin-left: auto; display: flex; align-items: center; height: 40px; padding-right: 1px; }
.sogou-sm { width: 16px; height: 15px; font-size: 14px; transform: rotate(-10deg); border-radius: 3px; }
.clock { width: 72px; color: #fff; display: flex; flex-direction: column; align-items: center; font-size: 12px; line-height: 17px; }
.show-desk { width: 13px; height: 37px; margin-left: 3px; border: 1px solid #666; background: linear-gradient(#555, #222); flex: none; }

/* timer overlay */
.timer { position: absolute; left: 1727px; top: 935px; width: 48px; height: 48px; border-radius: 50%; border: 3px solid #eaf2fc; box-shadow: 0 0 2px #c4d6ea; background: linear-gradient(#3d96f5, #62b4ff); color: #d8ecff; display: flex; align-items: center; justify-content: center; font-size: 14px; }
```
